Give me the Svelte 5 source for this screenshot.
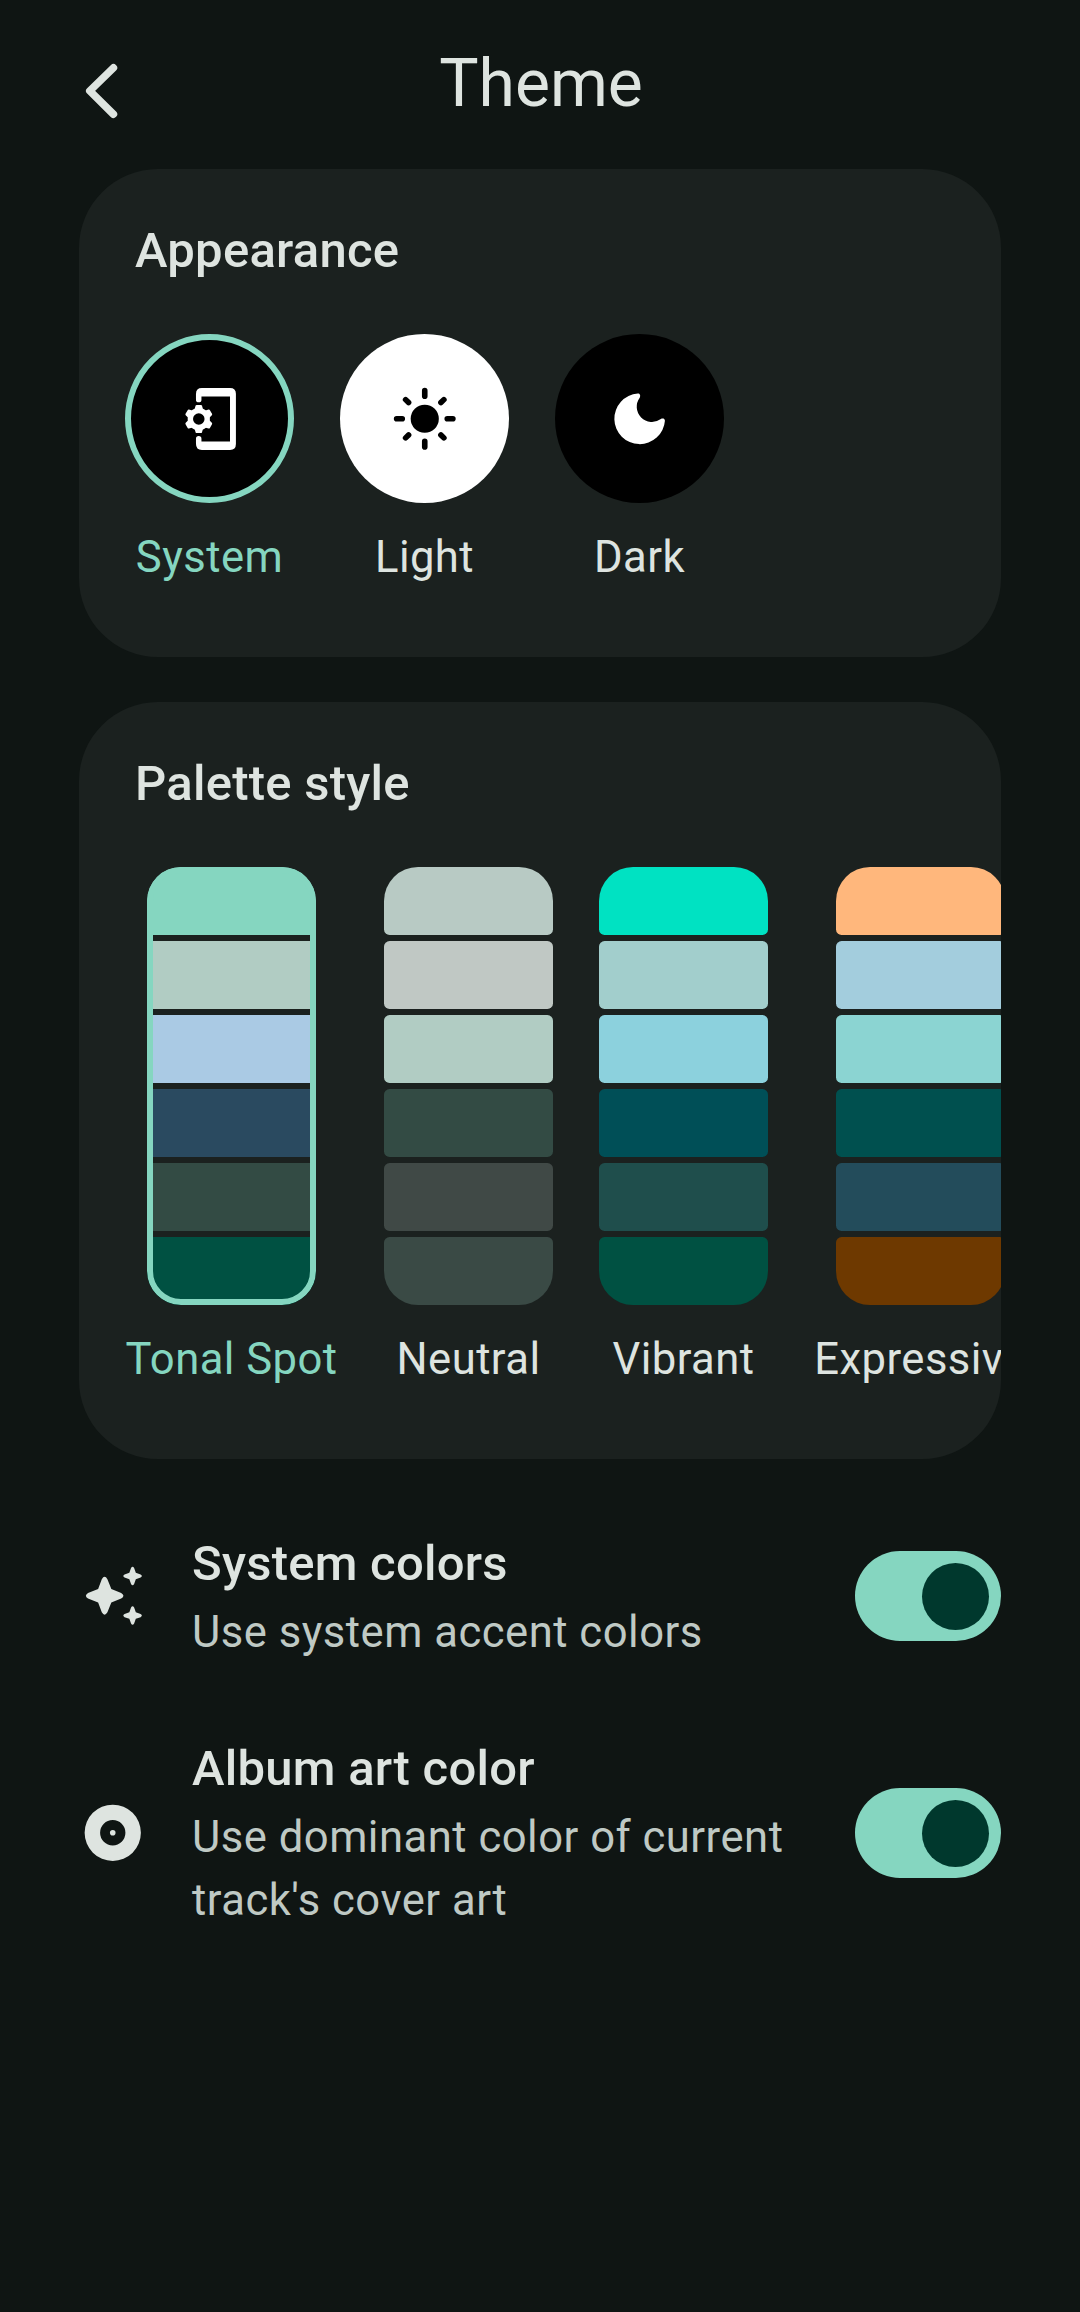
<script>
  const modes = [
    { id: 'system', label: 'System', selected: true },
    { id: 'light', label: 'Light', selected: false },
    { id: 'dark', label: 'Dark', selected: false }
  ];

  const palettes = [
    { name: 'Tonal Spot', wide: true, selected: true, colors: ['#85d6c0', '#b1ccc3', '#aacae4', '#2a4a60', '#334b44', '#005142'] },
    { name: 'Neutral', colors: ['#b8cac4', '#c0c8c4', '#b1ccc3', '#334b44', '#404946', '#3a4a45'] },
    { name: 'Vibrant', colors: ['#00e2c2', '#a2cecc', '#8cd1dd', '#004f57', '#1f4e4c', '#005142'] },
    { name: 'Expressive', wide: true, colors: ['#ffb77c', '#a3cddd', '#8bd4d2', '#00504f', '#234c5b', '#6e3900'] }
  ];

  const settings = [
    { icon: 'sparkle', title: 'System colors', text: 'Use system accent colors' },
    { icon: 'album', title: 'Album art color', text: "Use dominant color of current track's cover art" }
  ];

  const teeth = [0, 60, 120, 180, 240, 300];
</script>

<main class="screen">
  <header class="bar">
    <button class="back" aria-label="Back">
      <svg width="40" height="60" viewBox="0 0 40 60"><path d="M34.4 6.9L10.8 29.9L34.4 53.2" fill="none" stroke="currentColor" stroke-width="7.6" stroke-linecap="round" stroke-linejoin="round" /></svg>
    </button>
    <h1>Theme</h1>
  </header>

  <section class="card appearance">
    <h2>Appearance</h2>
    <div class="strip">
      {#each modes as mode}
        <div class="option" class:selected={mode.selected}>
          <div class="circle {mode.id}">
            <svg class="glyph" viewBox="0 0 24 24" fill="currentColor">
              {#if mode.id === 'system'}
                <path d="M7.1 5.2V3.2Q7.1 1.1 9.2 1.1H19.2Q21.3 1.1 21.3 3.1V21Q21.3 23.1 19.2 23.1H9.2Q7.1 23.1 7.1 20.9V19.1A.97.97 0 0 1 9.05 19.1V20.05H19.2V4.05H9.05V5.2A.97.97 0 0 1 7.1 5.2Z" />
                <circle cx="8.1" cy="12.1" r="3" fill="none" stroke="currentColor" stroke-width="1.9" />
                {#each teeth as angle}
                  <path transform="rotate({angle} 8.1 12.1)" d="M6.5 9.1L6.95 7.4Q7.05 7.1 7.35 7.1H8.85Q9.15 7.1 9.25 7.4L9.7 9.1Z" />
                {/each}
              {:else if mode.id === 'light'}
                <circle cx="12" cy="12" r="5" />
                <path d="M12 2V4M12 20V22M2 12H4M20 12H22M5.2 5.2L6.25 6.25M17.75 17.75L18.8 18.8M18.8 5.2L17.75 6.25M6.25 17.75L5.2 18.8" stroke="currentColor" stroke-width="2" stroke-linecap="round" />
              {:else}
                <path d="M11.3 3.05A9 9 0 1 0 20.95 12.7C20.9 11.9 20.1 11.8 19.5 12.1A5.4 5.4 0 0 1 12 4.5C12.4 3.7 12 3 11.3 3.05Z" />
              {/if}
            </svg>
          </div>
          <span class="label">{mode.label}</span>
        </div>
      {/each}
    </div>
  </section>

  <section class="card palette">
    <h2>Palette style</h2>
    <div class="strip">
      {#each palettes as palette}
        <div class="option" class:wide={palette.wide} class:selected={palette.selected}>
          <div class="swatches">
            {#each palette.colors as color}
              <i style:background={color}></i>
            {/each}
          </div>
          <span class="label">{palette.name}</span>
        </div>
      {/each}
    </div>
  </section>

  <div class="settings">
    {#each settings as item}
      <div class="row">
        <svg class="glyph" viewBox="0 0 24 24" fill="currentColor">
          {#if item.icon === 'sparkle'}
            <path d="M8.1 6.1L6.8 9.6L3.2 11Q1.7 12 3.2 13L6.8 14.4L8.1 17.9Q9.1 19.6 10.1 17.9L11.5 14.4L15 13Q16.6 12 15 11L11.5 9.6L10.1 6.1Q9.1 4.4 8.1 6.1Z" />
            <path id="spark" d="M18.5 2.1L17.9 3.8L16.2 4.4Q15.3 4.95 16.2 5.5L17.9 6.1L18.5 7.8Q19.05 8.7 19.6 7.8L20.2 6.1L21.9 5.5Q22.8 4.95 21.9 4.4L20.2 3.8L19.6 2.1Q19.05 1.2 18.5 2.1Z" />
            <use href="#spark" y="14.1" />
          {:else}
            <path fill-rule="evenodd" d="M12 2A10 10 0 1 0 12 22A10 10 0 0 0 12 2ZM12 7.5A4.5 4.5 0 1 1 12 16.5A4.5 4.5 0 0 1 12 7.5Z" />
            <circle cx="12" cy="12" r="1" />
          {/if}
        </svg>
        <div class="copy">
          <h3>{item.title}</h3>
          <p>{item.text}</p>
        </div>
        <button class="switch" role="switch" aria-checked="true" aria-label={item.title}><span class="knob"></span></button>
      </div>
    {/each}
  </div>
</main>

<style>
  :global(body) {
    margin: 0;
    background: #0f1513;
  }
  .screen {
    box-sizing: border-box;
    width: 1080px;
    height: 2312px;
    padding: 0 79px;
    overflow: hidden;
    background: #0f1513;
    color: #dee4e0;
    font-family: Roboto, sans-serif;
  }
  h1, h2, h3, p {
    margin: 0;
  }
  button {
    padding: 0;
    border: 0;
    background: none;
    color: inherit;
  }
  .bar {
    display: grid;
    grid-template-columns: 101px 1fr 99px;
    height: 169px;
  }
  .back {
    display: flex;
    align-items: flex-start;
    padding-top: 61px;
  }
  h1 {
    padding-top: 45px;
    font-size: 66px;
    line-height: 77px;
    font-weight: 400;
    text-align: center;
  }
  .card {
    box-sizing: border-box;
    padding: 46px 0 0 46px;
    border-radius: 79px;
    background: #1b211f;
    overflow: hidden;
  }
  .appearance {
    height: 488px;
    margin-bottom: 45px;
  }
  .palette {
    height: 757px;
  }
  h2, h3 {
    font-size: 49px;
    font-weight: 500;
    line-height: 71px;
    letter-spacing: 0.25px;
  }
  h2 {
    padding-left: 10px;
    margin-bottom: 48px;
  }
  .strip {
    display: flex;
    gap: 46px;
    width: max-content;
  }
  .option {
    display: flex;
    flex-direction: column;
    align-items: center;
    width: 169px;
  }
  .option.wide {
    width: 213px;
  }
  .selected .label {
    color: #85d6c0;
  }
  .circle {
    box-sizing: border-box;
    display: flex;
    align-items: center;
    justify-content: center;
    width: 169px;
    height: 169px;
    border-radius: 50%;
    background: #000;
    color: #fff;
  }
  .circle.light {
    background: #fff;
    color: #000;
  }
  .selected .circle {
    border: 6px solid #85d6c0;
  }
  .glyph {
    flex: none;
    width: 67.5px;
    height: 67.5px;
  }
  .label {
    margin-top: 23px;
    font-size: 43.6px;
    line-height: 63px;
    letter-spacing: 0.45px;
    white-space: nowrap;
  }
  .swatches {
    position: relative;
    display: flex;
    flex-direction: column;
    gap: 6px;
    width: 169px;
    height: 438px;
    border-radius: 34px;
    overflow: hidden;
  }
  .swatches i {
    height: 68px;
    border-radius: 5.6px;
  }
  .selected .swatches i {
    border-radius: 0;
  }
  .selected .swatches::after {
    content: '';
    position: absolute;
    inset: 0;
    border: 6px solid #85d6c0;
    border-radius: 34px;
  }
  .settings {
    display: flex;
    flex-direction: column;
    gap: 69px;
    padding-top: 69px;
  }
  .row {
    display: grid;
    grid-template-columns: 68px 1fr 146px;
    column-gap: 45px;
    align-items: center;
  }
  p {
    margin-top: 2px;
    color: #bfc9c4;
    font-size: 43.6px;
    line-height: 63px;
    letter-spacing: 0.5px;
  }
  .switch {
    box-sizing: border-box;
    display: flex;
    align-items: center;
    justify-content: flex-end;
    width: 146px;
    height: 90px;
    padding: 1px 12px 0 0;
    border-radius: 45px;
    background: #85d6c0;
  }
  .knob {
    width: 67px;
    height: 67px;
    border-radius: 50%;
    background: #00382d;
  }
</style>
